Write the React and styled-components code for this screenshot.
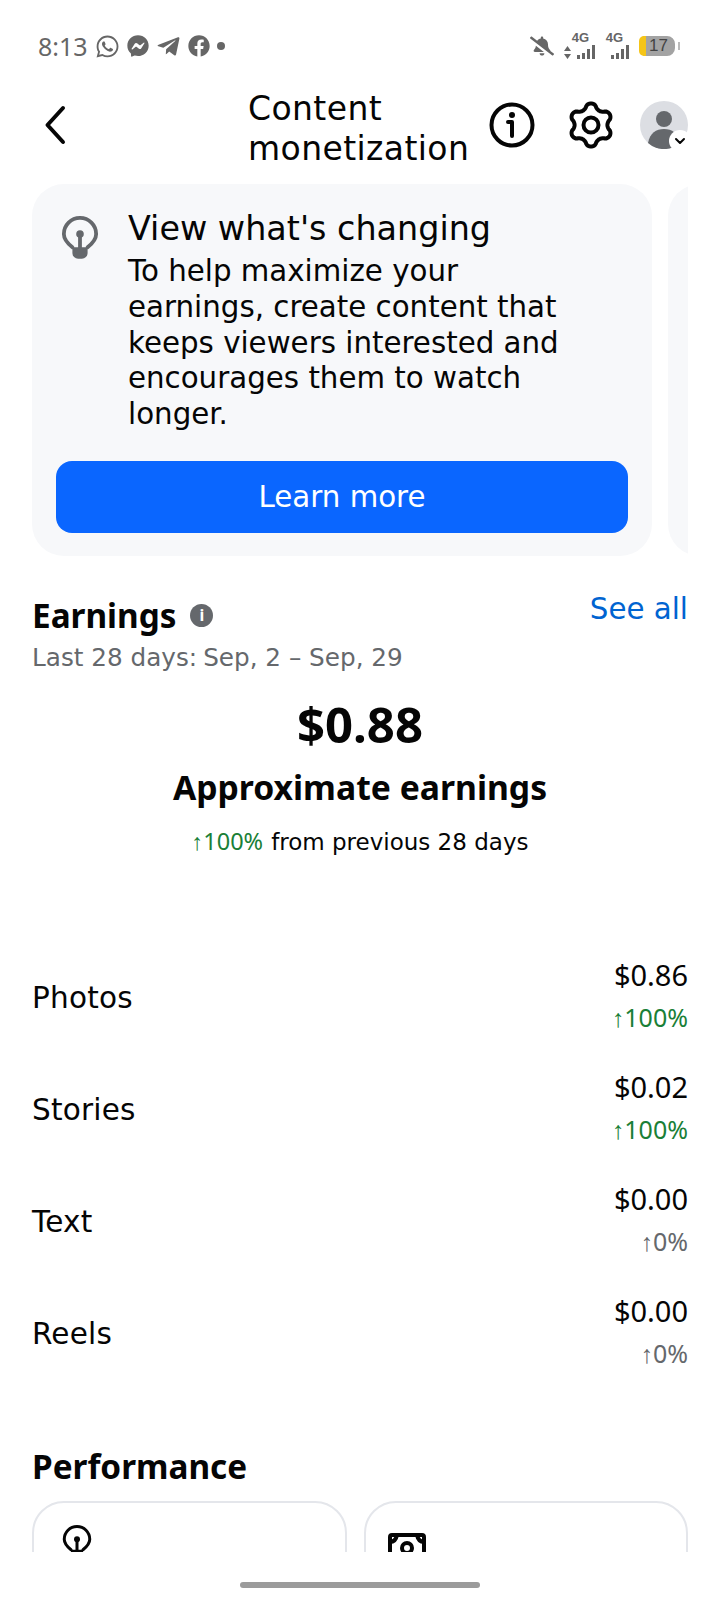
import React from 'react'
import styled, { createGlobalStyle } from 'styled-components'
import { FaWhatsapp, FaFacebookMessenger, FaTelegramPlane, FaFacebook, FaBellSlash } from 'react-icons/fa'
import { ChevronDown } from 'lucide-react'

const Global = createGlobalStyle`
  html, body { margin: 0; padding: 0; background: #fff; }
  * { box-sizing: border-box; }
  body { font-family: "DejaVu Sans", "Noto Sans", sans-serif; color: #050505; }
`

const Screen = styled.div`
  width: 720px;
  height: 1600px;
  overflow: hidden;
  display: flex;
  flex-direction: column;
  background: #fff;
`

const StatusBar = styled.div`
  height: 66px;
  padding: 28px 45px 0 38px;
  display: flex;
  justify-content: space-between;
  align-items: flex-start;
  color: #666;
`

const StatusGroup = styled.div`
  display: flex;
  align-items: center;
  gap: ${p => p.$gap || 7}px;
  height: 36px;
`

const Time = styled.span`
  font-family: "Noto Sans", sans-serif;
  font-size: 25px;
`

const Dot = styled.span`
  width: 8px;
  height: 8px;
  border-radius: 50%;
  background: #666;
`

const Signal = styled.div`
  position: relative;
  width: ${p => p.$w}px;
  height: 26px;
  display: flex;
  align-items: flex-end;
  justify-content: flex-end;
  gap: 2px;
`

const SignalLabel = styled.span`
  position: absolute;
  top: -2px;
  right: 6px;
  font-family: "Liberation Sans", sans-serif;
  font-size: 13px;
  font-weight: 700;
  line-height: 13px;
`

const Updown = styled.svg`
  position: absolute;
  left: 0;
  bottom: 0;
`

const Bar = styled.i`
  width: 3px;
  background: #666;
  height: ${p => p.$h}px;
`

const Battery = styled.div`
  position: relative;
  width: 36px;
  height: 20px;
  background: #a3a3a3;
  border-left: 7px solid #f5c518;
  border-radius: 5px 8px 8px 5px;
  font-family: "Liberation Sans", sans-serif;
  font-size: 17px;
  line-height: 20px;
  color: #444;
  padding-left: 3px;

  &::after {
    content: '';
    position: absolute;
    right: -5px;
    top: 6px;
    width: 2px;
    height: 8px;
    background: #bbb;
  }
`

const Header = styled.header`
  height: 118px;
  display: flex;
  align-items: center;
  padding: 0 32px 0 44px;
`

const Title = styled.h1`
  margin: 8px 0 0 182px;
  width: 226px;
  font-size: 33px;
  line-height: 40px;
  letter-spacing: 0.4px;
  font-weight: 400;
  flex: none;
`

const HeaderIcons = styled.div`
  margin-left: auto;
  display: flex;
  align-items: center;
  gap: 32px;
`

const Avatar = styled.div`
  position: relative;
  width: 48px;
  height: 48px;
  margin-left: -7px;
  border-radius: 50%;
  background: #dcdee3;
`

const AvatarBadge = styled.div`
  position: absolute;
  right: -3px;
  bottom: -3px;
  width: 22px;
  height: 22px;
  border-radius: 50%;
  background: #fff;
  display: flex;
  align-items: center;
  justify-content: center;
`

const Main = styled.main`
  height: 1368px;
  overflow: hidden;
  padding: 0 32px;
`

const Carousel = styled.div`
  display: flex;
  gap: 16px;
  overflow: hidden;
`

const Tip = styled.section`
  flex: none;
  width: 620px;
  height: 372px;
  border-radius: 32px;
  background: #f7f8fa;
  padding: 24px;
`

const TipBody = styled.div`
  display: flex;
  gap: 32px;
  height: 253px;
`

const BulbSlot = styled.div`
  flex: none;
  width: 40px;
  padding: 8px 0 0 5px;
`

const TipText = styled.div`
  width: 445px;
`

const TipTitle = styled.h2`
  margin: 0 0 4px;
  font-size: 33.4px;
  line-height: 42px;
  font-weight: 400;
`

const TipCopy = styled.p`
  margin: 0;
  font-size: 29.3px;
  line-height: 35.8px;
`

const Button = styled.button`
  display: block;
  width: 100%;
  height: 72px;
  border: 0;
  border-radius: 16px;
  background: #0a66ff;
  color: #fff;
  font-family: inherit;
  font-size: 29.3px;
`

const EarningsHead = styled.div`
  margin-top: 35px;
  display: flex;
  justify-content: space-between;
  align-items: flex-start;
`

const SectionTitle = styled.h3`
  margin: 0;
  display: flex;
  align-items: center;
  gap: 14px;
  font-family: "Noto Sans", sans-serif;
  font-size: 33.3px;
  line-height: 48px;
  font-weight: 700;
`

const SeeAll = styled.a`
  color: #0064d1;
  font-size: 29.3px;
  line-height: 36px;
`

const InfoDot = styled.span`
  width: 23px;
  height: 23px;
  border-radius: 50%;
  background: #65686c;
  color: #fff;
  display: flex;
  align-items: center;
  justify-content: center;
  font-size: 16px;
  font-weight: 700;
`

const Period = styled.div`
  display: flex;
  gap: 6px;
  margin-top: 1px;
  font-size: 24.7px;
  line-height: 36px;
  color: #65686c;
`

const Summary = styled.div`
  text-align: center;
  margin-top: 19px;
`

const Amount = styled.div`
  font-family: "Noto Sans", sans-serif;
  font-size: 49px;
  line-height: 58px;
  font-weight: 700;
`

const SummaryLabel = styled.div`
  margin-top: 10px;
  font-family: "Noto Sans", sans-serif;
  font-size: 33.7px;
  line-height: 48px;
  font-weight: 700;
`

const Compare = styled.div`
  margin-top: 10px;
  font-size: 23px;
  line-height: 40px;
  display: flex;
  justify-content: center;
  align-items: baseline;
  gap: 8px;
`

const Trend = styled.span`
  font-family: "Noto Sans", sans-serif;
  font-size: ${p => p.$size || 25}px;
  color: ${p => (p.$flat ? '#65686c' : '#1a7f37')};
`

const Rows = styled.div`
  margin-top: 80px;
`

const Row = styled.div`
  height: 112px;
  display: flex;
  justify-content: space-between;
  align-items: center;
`

const RowLabel = styled.span`
  font-size: 29.5px;
  letter-spacing: 0.2px;
`

const RowValue = styled.div`
  text-align: right;
  padding-bottom: 4px;
  font-family: "Noto Sans", sans-serif;
  font-size: 29px;
  line-height: 41px;
`

const PerfTitle = styled(SectionTitle)`
  margin-top: 52px;
`

const PerfGrid = styled.div`
  margin-top: 11px;
  display: grid;
  grid-template-columns: 315px 324px;
  gap: 17px;
`

const PerfCard = styled.div`
  height: 200px;
  border: 2px solid #e4e6eb;
  border-radius: 32px;
  padding: ${p => p.$top}px ${p => p.$left}px;
`

const HomeBar = styled.div`
  width: 240px;
  height: 6px;
  margin: 30px auto 0;
  border-radius: 3px;
  background: #9b9b9b;
`

const rows = [
  { label: 'Photos', value: '$0.86', trend: '↑100%' },
  { label: 'Stories', value: '$0.02', trend: '↑100%' },
  { label: 'Text', value: '$0.00', trend: '↑0%', flat: true },
  { label: 'Reels', value: '$0.00', trend: '↑0%', flat: true },
]

const Bulb = ({ size = 38, color = '#65686c' }) => (
  <svg width={size} height={size * 1.15} viewBox="0 0 40 46" fill="none">
    <path d="M12 33C7 29 3 25 3 19a17 17 0 0 1 34 0c0 6-4 10-9 14" stroke={color} strokeWidth="4" strokeLinecap="round" />
    <path d="M20 19v16" stroke={color} strokeWidth="4" strokeLinecap="round" />
    <circle cx="20" cy="19" r="4" fill={color} />
    <path d="M12 33h16v6a6 6 0 0 1-6 6h-4a6 6 0 0 1-6-6z" fill={color} />
  </svg>
)

const Chevron = () => (
  <svg width="22" height="40" viewBox="0 0 22 40" fill="none" stroke="#050505" strokeWidth="4" strokeLinecap="round" strokeLinejoin="round">
    <path d="M19 3 3.5 20 19 37" />
  </svg>
)

const InfoIcon = () => (
  <svg width="46" height="46" viewBox="0 0 46 46" fill="none" stroke="#050505" strokeWidth="4">
    <circle cx="23" cy="23" r="20.5" />
    <circle cx="23" cy="13" r="3" fill="#050505" stroke="none" />
    <path d="M19 20h4v14" strokeLinecap="round" strokeLinejoin="round" />
  </svg>
)

// six soft lobes, points up
const gearPath = () => {
  const pts = []
  for (let i = 0; i < 180; i++) {
    const a = (i / 180) * Math.PI * 2
    const wave = Math.cos(6 * a)
    const r = 19 + 2.6 * Math.sign(wave) * Math.pow(Math.abs(wave), 0.7)
    pts.push(`${(24 + r * Math.sin(a)).toFixed(2)} ${(24 - r * Math.cos(a)).toFixed(2)}`)
  }
  return `M${pts.join('L')}Z`
}

const GearIcon = () => (
  <svg width="48" height="48" viewBox="0 0 48 48" fill="none" stroke="#050505" strokeWidth="4" strokeLinejoin="round">
    <path d={gearPath()} />
    <circle cx="24" cy="24" r="7.5" />
  </svg>
)

const Money = () => (
  <svg width="38" height="30" viewBox="0 0 38 30" fill="none" stroke="#050505" strokeWidth="4">
    <rect x="2" y="2" width="34" height="26" rx="2" />
    <circle cx="19" cy="15" r="5" />
    <path d="M2 9c3 0 6-2 7-7M36 9c-3 0-6-2-7-7M2 21c3 0 6 2 7 7M36 21c-3 0-6 2-7 7" />
  </svg>
)

export default function App() {
  return (
    <Screen>
      <Global />
      <StatusBar>
        <StatusGroup>
          <Time>8:13</Time>
          <FaWhatsapp size={25} />
          <FaFacebookMessenger size={22} />
          <FaTelegramPlane size={25} />
          <FaFacebook size={22} />
          <Dot />
        </StatusGroup>
        <StatusGroup $gap={10}>
          <FaBellSlash size={24} />
          <Signal $w={31}>
            <SignalLabel>4G</SignalLabel>
            <Updown width="7" height="13" viewBox="0 0 7 13" fill="#666">
              <path d="M3.5 0 7 5H0zM3.5 13 0 8h7z" />
            </Updown>
            <Bar $h={4} /><Bar $h={6} /><Bar $h={10} /><Bar $h={14} />
          </Signal>
          <Signal $w={24}>
            <SignalLabel>4G</SignalLabel>
            <Bar $h={4} /><Bar $h={6} /><Bar $h={10} /><Bar $h={14} />
          </Signal>
          <Battery>17</Battery>
        </StatusGroup>
      </StatusBar>

      <Header>
        <Chevron />
        <Title>Content monetization</Title>
        <HeaderIcons>
          <InfoIcon />
          <GearIcon />
          <Avatar>
            <svg width="48" height="48" viewBox="0 0 48 48">
              <circle cx="24" cy="18" r="8" fill="#65686c" />
              <path d="M8 42c2-10 8-14 16-14s14 4 16 14a24 24 0 0 1-32 0z" fill="#65686c" />
            </svg>
            <AvatarBadge><ChevronDown size={16} strokeWidth={3} /></AvatarBadge>
          </Avatar>
        </HeaderIcons>
      </Header>

      <Main>
        <Carousel>
          <Tip>
            <TipBody>
              <BulbSlot><Bulb /></BulbSlot>
              <TipText>
                <TipTitle>View what's changing</TipTitle>
                <TipCopy>To help maximize your earnings, create content that keeps viewers interested and encourages them to watch longer.</TipCopy>
              </TipText>
            </TipBody>
            <Button>Learn more</Button>
          </Tip>
          <Tip />
        </Carousel>

        <EarningsHead>
          <SectionTitle>Earnings <InfoDot>i</InfoDot></SectionTitle>
          <SeeAll>See all</SeeAll>
        </EarningsHead>
        <Period><span>Last 28 days:</span><span>Sep, 2 – Sep, 29</span></Period>

        <Summary>
          <Amount>$0.88</Amount>
          <SummaryLabel>Approximate earnings</SummaryLabel>
          <Compare><Trend $size={23.5}>↑100%</Trend><span>from previous 28 days</span></Compare>
        </Summary>

        <Rows>
          {rows.map(r => (
            <Row key={r.label}>
              <RowLabel>{r.label}</RowLabel>
              <RowValue>
                <div>{r.value}</div>
                <Trend $flat={r.flat}>{r.trend}</Trend>
              </RowValue>
            </Row>
          ))}
        </Rows>

        <PerfTitle>Performance</PerfTitle>
        <PerfGrid>
          <PerfCard $top={22} $left={28}><Bulb size={30} color="#050505" /></PerfCard>
          <PerfCard $top={30} $left={22}><Money /></PerfCard>
        </PerfGrid>
      </Main>
      <HomeBar />
    </Screen>
  )
}
